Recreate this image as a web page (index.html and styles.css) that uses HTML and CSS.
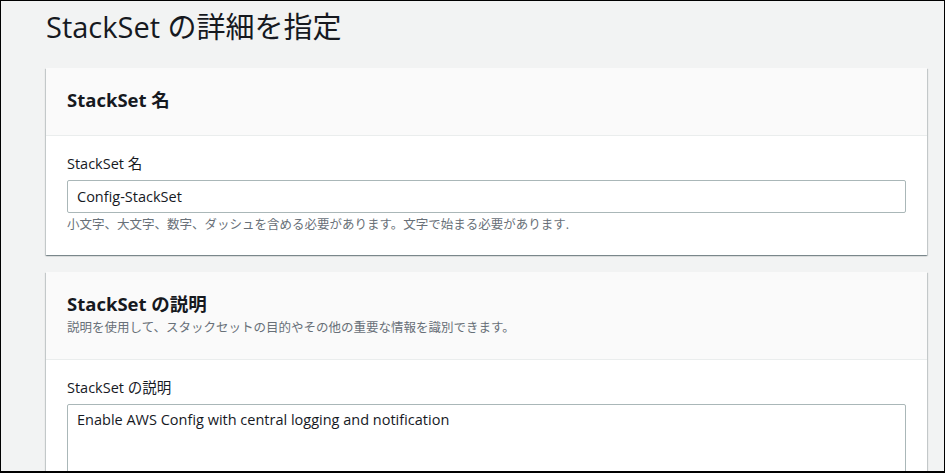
FILE: index.html
```html
<!DOCTYPE html>
<html lang="ja">
<head>
<meta charset="utf-8">
<title>StackSet の詳細を指定</title>
<link rel="stylesheet" href="styles.css">
</head>
<body>
<div class="frame">
  <div class="page">
    <h1 class="page-title">StackSet の詳細を指定</h1>

    <section class="card">
      <div class="card-header">
        <h2 class="card-title">StackSet 名</h2>
      </div>
      <div class="card-body">
        <label class="field-label" for="ssname">StackSet 名</label>
        <input class="text-input" id="ssname" type="text" value="Config-StackSet">
        <div class="field-hint">小文字、大文字、数字、ダッシュを含める必要があります。文字で始まる必要があります.</div>
      </div>
    </section>

    <section class="card">
      <div class="card-header card-header-desc">
        <h2 class="card-title">StackSet の説明</h2>
        <div class="card-subtitle">説明を使用して、スタックセットの目的やその他の重要な情報を識別できます。</div>
      </div>
      <div class="card-body">
        <label class="field-label" for="ssdesc">StackSet の説明</label>
        <textarea class="text-area" id="ssdesc">Enable AWS Config with central logging and notification</textarea>
      </div>
    </section>
  </div>
</div>
</body>
</html>
```

FILE: styles.css
```css
html, body {
  margin: 0;
  padding: 0;
  background: #ffffff;
}

.frame {
  width: 945px;
  height: 473px;
  box-sizing: border-box;
  border: 1px solid #000000;
  border-bottom-width: 2px;
  background: #f2f3f3;
  overflow: hidden;
  font-family: "Open Sans", "Noto Sans CJK JP", sans-serif;
  color: #16191f;
}

.page {
  padding: 8px 17px 0 44px;
}

.page-title {
  margin: 0 0 23px 1px;
  font-size: 29px;
  line-height: 36px;
  font-weight: 400;
  color: #16191f;
}

.card {
  background: #ffffff;
  margin-left: 1px;
  margin-bottom: 17px;
  box-shadow: 0 1px 1px 0 rgba(0, 28, 36, 0.3),
              1px 1px 1px 0 rgba(0, 28, 36, 0.15),
              -1px 1px 1px 0 rgba(0, 28, 36, 0.15);
}

.card-header {
  background: #fafafa;
  border-bottom: 1px solid #eaeded;
  padding: 19px 21px 22px;
}

.card-header-desc {
  padding-bottom: 22px;
}

.card-title {
  margin: 0;
  font-size: 18.5px;
  line-height: 26px;
  font-weight: 700;
  color: #16191f;
}

.card-subtitle {
  margin-top: 2px;
  font-size: 12.5px;
  line-height: 18px;
  color: #687078;
}

.card-body {
  padding: 17px 21px 22px;
  display: flex;
  flex-direction: column;
}

.field-label {
  font-size: 14.5px;
  line-height: 22px;
  margin-bottom: 5px;
  color: #16191f;
}

.text-input,
.text-area {
  box-sizing: border-box;
  width: 100%;
  margin: 0;
  border: 1px solid #aab7b8;
  border-radius: 2px;
  background: #ffffff;
  font-family: "Open Sans", "Noto Sans CJK JP", sans-serif;
  font-size: 14.5px;
  color: #16191f;
  outline: none;
}

.text-input {
  height: 33px;
  padding: 0 9px;
  line-height: 22px;
}

.text-area {
  height: 120px;
  padding: 4px 9px;
  line-height: 22px;
  resize: none;
}

.field-hint {
  margin-top: 4px;
  font-size: 12.5px;
  line-height: 16px;
  color: #687078;
}
```
